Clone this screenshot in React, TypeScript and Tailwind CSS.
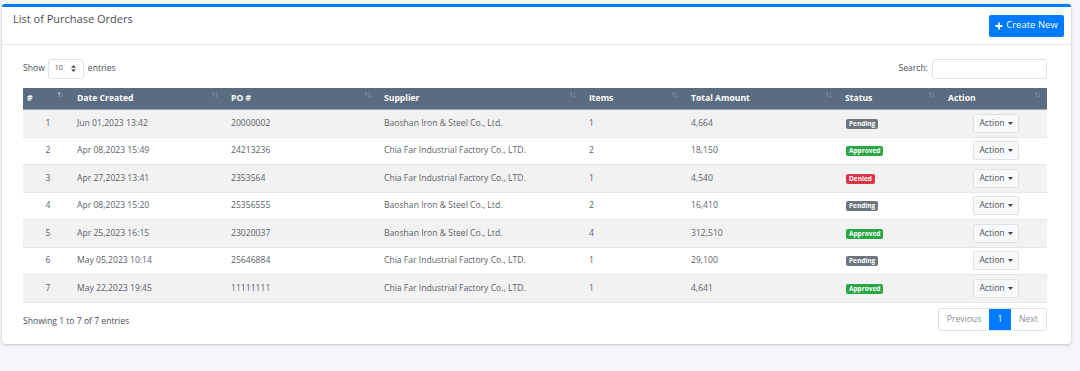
import React from "react";

type Row = { n: number; date: string; po: string; sup: string; items: string; total: string; status: "Pending" | "Approved" | "Denied" };

const rows: Row[] = [
  { n: 1, date: "Jun 01,2023 13:42", po: "20000002", sup: "Baoshan Iron & Steel Co., Ltd.", items: "1", total: "4,664", status: "Pending" },
  { n: 2, date: "Apr 08,2023 15:49", po: "24213236", sup: "Chia Far Industrial Factory Co., LTD.", items: "2", total: "18,150", status: "Approved" },
  { n: 3, date: "Apr 27,2023 13:41", po: "2353564", sup: "Chia Far Industrial Factory Co., LTD.", items: "1", total: "4,540", status: "Denied" },
  { n: 4, date: "Apr 08,2023 15:20", po: "25356555", sup: "Baoshan Iron & Steel Co., Ltd.", items: "2", total: "16,410", status: "Pending" },
  { n: 5, date: "Apr 25,2023 16:15", po: "23020037", sup: "Baoshan Iron & Steel Co., Ltd.", items: "4", total: "312,510", status: "Approved" },
  { n: 6, date: "May 05,2023 10:14", po: "25646884", sup: "Chia Far Industrial Factory Co., LTD.", items: "1", total: "29,100", status: "Pending" },
  { n: 7, date: "May 22,2023 19:45", po: "11111111", sup: "Chia Far Industrial Factory Co., LTD.", items: "1", total: "4,641", status: "Approved" },
];

const cols = [
  { label: "#", w: "w-[47px]", pad: "pl-[4px]", first: true },
  { label: "Date Created", w: "w-[154px]", pad: "pl-[7px]" },
  { label: "PO #", w: "w-[153px]", pad: "pl-[7px]" },
  { label: "Supplier", w: "w-[205px]", pad: "pl-[7px]" },
  { label: "Items", w: "w-[102px]", pad: "pl-[7px]" },
  { label: "Total Amount", w: "w-[154px]", pad: "pl-[7px]" },
  { label: "Status", w: "w-[103px]", pad: "pl-[7px]" },
  { label: "Action", w: "w-[106px]", pad: "pl-[7px]" },
];

function SortIcon({ active }: { active?: boolean }) {
  return (
    <span className="absolute right-[6px] top-[2px] flex text-[8px] leading-none font-normal">
      <span className={active ? "text-white" : "text-white/40"}>↑</span>
      <span className="text-white/40 -ml-[1px]">↓</span>
    </span>
  );
}

function Badge({ s }: { s: Row["status"] }) {
  const cls =
    s === "Pending" ? "bg-[#6c757d]" : s === "Approved" ? "bg-[#28a745]" : "bg-[#dc3545]";
  return (
    <span className={`${cls} inline-block rounded-[2px] px-[3px] text-[6.5px] leading-[10px] font-bold text-white`}>{s}</span>
  );
}

export default function App() {
  return (
    <div className="w-[1080px] h-[371px] bg-[#f4f6f9] pt-[4px] pl-[2px]" style={{ fontFamily: '"Open Sans", "Noto Sans", sans-serif' }}>
      <div className="w-[1069px] bg-white border-t-[3px] border-[#007bff] rounded-t-[3px] rounded-b-[3px] shadow-[0_0_1px_rgba(0,0,0,0.13),0_1px_3px_rgba(0,0,0,0.2)]">
        {/* header */}
        <div className="h-[38px] flex items-center justify-between border-b border-[#e5e7ea] pl-[11px] pr-[7px]">
          <div className="text-[11px] text-[#495057] -mt-[12px]">List of Purchase Orders</div>
          <button className="h-[22px] w-[75px] bg-[#007bff] text-white text-[9.5px] flex items-center justify-center gap-[3px] rounded-[2px]">
            <svg width="8" height="8" viewBox="0 0 8 8"><path d="M4 0.5v7M0.5 4h7" stroke="white" strokeWidth="1.8" /></svg>
            Create New
          </button>
        </div>
        {/* body */}
        <div className="pl-[21px] pr-[24px] pt-[13px] pb-[13px]">
          <div className="flex items-center justify-between h-[21px]">
            <div className="flex items-center text-[8.6px] text-[#495057]">
              <span>Show</span>
              <div className="ml-[3px] mr-[4px] w-[36px] h-[20px] border border-[#dee2e6] rounded-[3px] flex items-center pl-[6px] gap-[8px] text-[7px]">
                <span>10</span>
                <svg width="5" height="7" viewBox="0 0 5 7"><path d="M2.5 0L5 2.8H0z M2.5 7L0 4.2h5z" fill="#555" /></svg>
              </div>
              <span>entries</span>
            </div>
            <div className="flex items-center text-[8.6px] text-[#495057]">
              <span>Search:</span>
              <div className="ml-[4px] w-[115px] h-[20px] border border-[#dee2e6] rounded-[3px]" />
            </div>
          </div>
          <div className="mt-[9px] w-[1024px]">
            <div className="flex h-[22px] bg-[#5a6c80] border-b border-[#9aa6b2] text-white text-[8.6px] font-bold">
              {cols.map((c, i) => (
                <div key={i} className={`${c.w} ${c.pad} relative flex items-center`}>
                  {c.label}
                  <SortIcon active={c.first} />
                </div>
              ))}
            </div>
            {rows.map((r, i) => (
              <div key={i} className={`flex h-[27.5px] border-b border-[#e5e7ea] text-[8.6px] text-[#5a5f66] items-center ${i % 2 === 0 ? "bg-[#f2f2f2]" : "bg-white"}`}>
                <div className="w-[47px] text-center pl-[3px]">{r.n}</div>
                <div className="w-[154px] pl-[7px]">{r.date}</div>
                <div className="w-[153px] pl-[7px]">{r.po}</div>
                <div className="w-[205px] pl-[7px]">{r.sup}</div>
                <div className="w-[102px] pl-[7px]">{r.items}</div>
                <div className="w-[154px] pl-[7px]">{r.total}</div>
                <div className="w-[103px] pl-[8px]"><Badge s={r.status} /></div>
                <div className="w-[106px] pl-[32px]">
                  <div className="w-[46px] h-[19px] border border-[#dee2e6] bg-[#f8f9fa] rounded-[2px] flex items-center justify-center gap-[3px] text-[8.6px] text-[#495057]">
                    Action
                    <svg width="5" height="3" viewBox="0 0 5 3"><path d="M0 0h5L2.5 3z" fill="#444" /></svg>
                  </div>
                </div>
              </div>
            ))}
          </div>
          <div className="flex items-center justify-between mt-[5px]">
            <div className="text-[8.6px] text-[#495057] mt-[4px]">Showing 1 to 7 of 7 entries</div>
            <div className="flex h-[23px] border border-[#dee2e6] rounded-[3px] text-[8.6px] overflow-hidden">
              <div className="w-[50px] flex items-center justify-center text-[#868e96]">Previous</div>
              <div className="w-[22px] flex items-center justify-center bg-[#007bff] text-white">1</div>
              <div className="w-[35px] flex items-center justify-center text-[#868e96]">Next</div>
            </div>
          </div>
        </div>
      </div>
    </div>
  );
}
